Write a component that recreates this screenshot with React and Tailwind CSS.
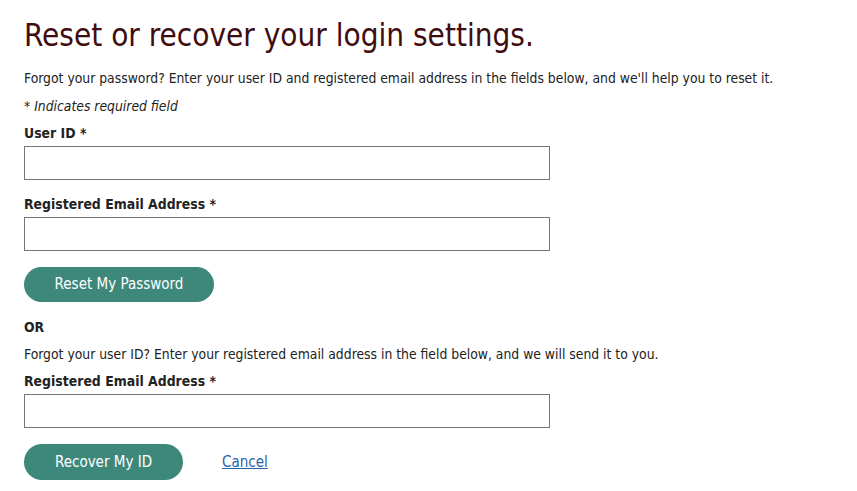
import React from 'react';

const Label = ({ children }) => (
  <label className="block font-bold text-[13.9px] leading-[18px] text-[#222] mb-[4px]">{children}</label>
);

const Field = () => (
  <input type="text" className="block w-[526px] h-[34px] border border-[#767676] bg-white px-2 outline-none" />
);

export default function App() {
  return (
    <div className="bg-white min-h-screen px-[24px] pt-[15px] text-[#222] font-['DejaVu_Sans_Condensed','DejaVu_Sans',sans-serif]">
      <h1 className="text-[31.2px] leading-[40px] text-[#3f0c10] font-normal">Reset or recover your login settings.</h1>
      <p className="mt-[14px] text-[13.8px] leading-[18px]">
        Forgot your password? Enter your user ID and registered email address in the fields below, and we'll help you to reset it.
      </p>
      <p className="mt-[10px] text-[13.8px] leading-[18px] italic">* Indicates required field</p>
      <div className="mt-[9px]">
        <Label>User ID *</Label>
        <Field />
      </div>
      <div className="mt-[15px]">
        <Label>Registered Email Address *</Label>
        <Field />
      </div>
      <button className="mt-[16px] h-[35px] w-[190px] rounded-full bg-[#3e877b] text-white text-[15px]">
        Reset My Password
      </button>
      <p className="mt-[16px] font-bold text-[13.8px] leading-[18px]">OR</p>
      <p className="mt-[9px] text-[13.8px] leading-[18px]">
        Forgot your user ID? Enter your registered email address in the field below, and we will send it to you.
      </p>
      <div className="mt-[9px]">
        <Label>Registered Email Address *</Label>
        <Field />
      </div>
      <div className="mt-[16px] flex items-center gap-[39px]">
        <button className="h-[36px] w-[159px] rounded-full bg-[#3e877b] text-white text-[15px]">Recover My ID</button>
        <a href="#" className="text-[15px] text-[#2a62a8] underline">Cancel</a>
      </div>
    </div>
  );
}
